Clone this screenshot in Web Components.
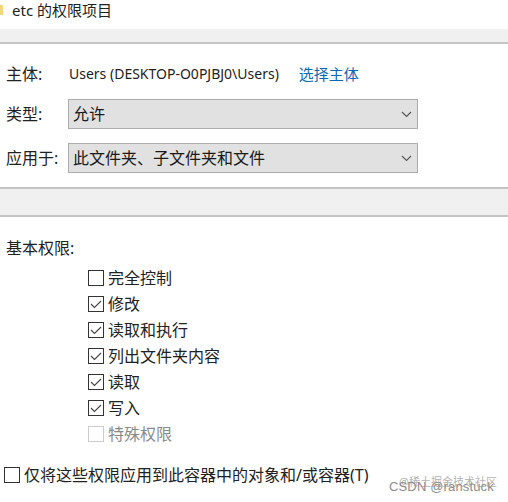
<!DOCTYPE html>
<html lang="zh-CN"><head><meta charset="utf-8"><style>
html,body{margin:0;padding:0;background:#fff}
body{width:508px;height:502px;overflow:hidden;position:relative;color:#1a1a1a;font:15px/20px "Open Sans","Noto Sans CJK SC",sans-serif}
</style></head><body>
<perm-dialog></perm-dialog>
<script>
const F='"Noto Sans","Noto Sans CJK SC",sans-serif';
class TitleBar extends HTMLElement{constructor(){super();this.attachShadow({mode:'open'}).innerHTML=`<style>
:host{display:flex;align-items:center;height:29px;box-sizing:border-box;padding:0 0 9px 0;font:15px/20px ${F};color:#222}
svg{width:3px;height:10px;flex:none;margin-right:9px}
</style><svg viewBox="0 0 3 10"><rect width="3" height="10" fill="#f4d67a"/></svg><slot></slot>`}}
class GrayBand extends HTMLElement{constructor(){super();this.attachShadow({mode:'open'}).innerHTML=`<style>
:host{display:block;box-sizing:border-box;background:#f0f0f0;border-bottom:2px solid #c4c4c4}
:host([top]){border-top:2px solid #c4c4c4}
</style>`}}
class FormRow extends HTMLElement{constructor(){super();this.attachShadow({mode:'open'}).innerHTML=`<style>
:host{display:flex;align-items:center;padding-left:6px;font:16px/20px ${F};color:#222}
.l{width:62px;flex:none;white-space:nowrap}
</style><div class="l"><slot name="label"></slot></div><slot></slot>`}}
class DropBox extends HTMLElement{constructor(){super();this.attachShadow({mode:'open'}).innerHTML=`<style>
:host{display:flex;align-items:center;justify-content:space-between;box-sizing:border-box;width:350px;height:30px;background:#e1e1e1;border:1px solid #adadad;padding:0 5px 0 4px;font:16px/20px ${F};color:#1a1a1a}
svg{width:11px;height:7px;flex:none}
</style><span><slot></slot></span><svg viewBox="0 0 11 7"><path d="M1 1l4.5 4.5L10 1" fill="none" stroke="#555" stroke-width="1.1"/></svg>`}}
class CheckItem extends HTMLElement{constructor(){super();this.attachShadow({mode:'open'})}
connectedCallback(){this.shadowRoot.innerHTML=`<style>
:host{display:flex;align-items:center;height:26px;font:16px/20px ${F};color:#222;white-space:nowrap}
:host([disabled]){color:#8a8a8a}
svg{width:16px;height:16px;flex:none;margin-right:4px}
</style><svg viewBox="0 0 16 16"><rect x=".5" y=".5" width="15" height="15" fill="#fff" stroke="${this.hasAttribute('disabled')?'#ccc':'#333'}"/>${this.hasAttribute('checked')?'<path d="M3 8l3.5 3.5L13 5" fill="none" stroke="#444" stroke-width="1.1"/>':''}</svg><slot></slot>`}}
class PermDialog extends HTMLElement{constructor(){super();this.attachShadow({mode:'open'}).innerHTML=`<style>
:host{display:block;width:508px;height:502px;position:relative;background:#fff}
a{color:#0a69b5;text-decoration:none;margin-left:20px;font-size:15px}
.v{white-space:nowrap;font-size:14px;margin-left:1px}
.band1{height:15px}.band2{height:30px;margin-top:14px}
.r1{height:20px;margin-top:20px}.r2{margin-top:15px}.r3{margin-top:14px}
.basic{padding-left:6px;margin-top:21px;font:16px/20px ${F};color:#222}
.list{display:flex;flex-direction:column;padding-left:88px;margin-top:7px}
.only{padding-left:4px;margin-top:15px}
.wm{position:absolute;white-space:nowrap;color:#9a9a9a}
.wm.a{left:399px;top:474px;font:11px/16px ${F};opacity:.75}
.wm.b{left:389px;top:479px;font:13px/16px "Liberation Sans",sans-serif;letter-spacing:.15px;color:#8c8c8c}
</style>
<title-bar>etc 的权限项目</title-bar>
<gray-band class="band1"></gray-band>
<form-row class="r1"><span slot="label">主体:</span><span class="v">Users (DESKTOP-O0PJBJ0\\Users)</span><a>选择主体</a></form-row>
<form-row class="r2"><span slot="label">类型:</span><drop-box>允许</drop-box></form-row>
<form-row class="r3"><span slot="label">应用于:</span><drop-box>此文件夹、子文件夹和文件</drop-box></form-row>
<gray-band class="band2" top></gray-band>
<div class="basic">基本权限:</div>
<div class="list">
<check-item>完全控制</check-item>
<check-item checked>修改</check-item>
<check-item checked>读取和执行</check-item>
<check-item checked>列出文件夹内容</check-item>
<check-item checked>读取</check-item>
<check-item checked>写入</check-item>
<check-item disabled>特殊权限</check-item>
</div>
<div class="only"><check-item>仅将这些权限应用到此容器中的对象和/或容器(T)</check-item></div>
<div class="wm a">@稀土掘金技术社区</div>
<div class="wm b">CSDN @ranstuck</div>`}}
customElements.define('title-bar',TitleBar);
customElements.define('gray-band',GrayBand);
customElements.define('form-row',FormRow);
customElements.define('drop-box',DropBox);
customElements.define('check-item',CheckItem);
customElements.define('perm-dialog',PermDialog);
</script></body></html>
